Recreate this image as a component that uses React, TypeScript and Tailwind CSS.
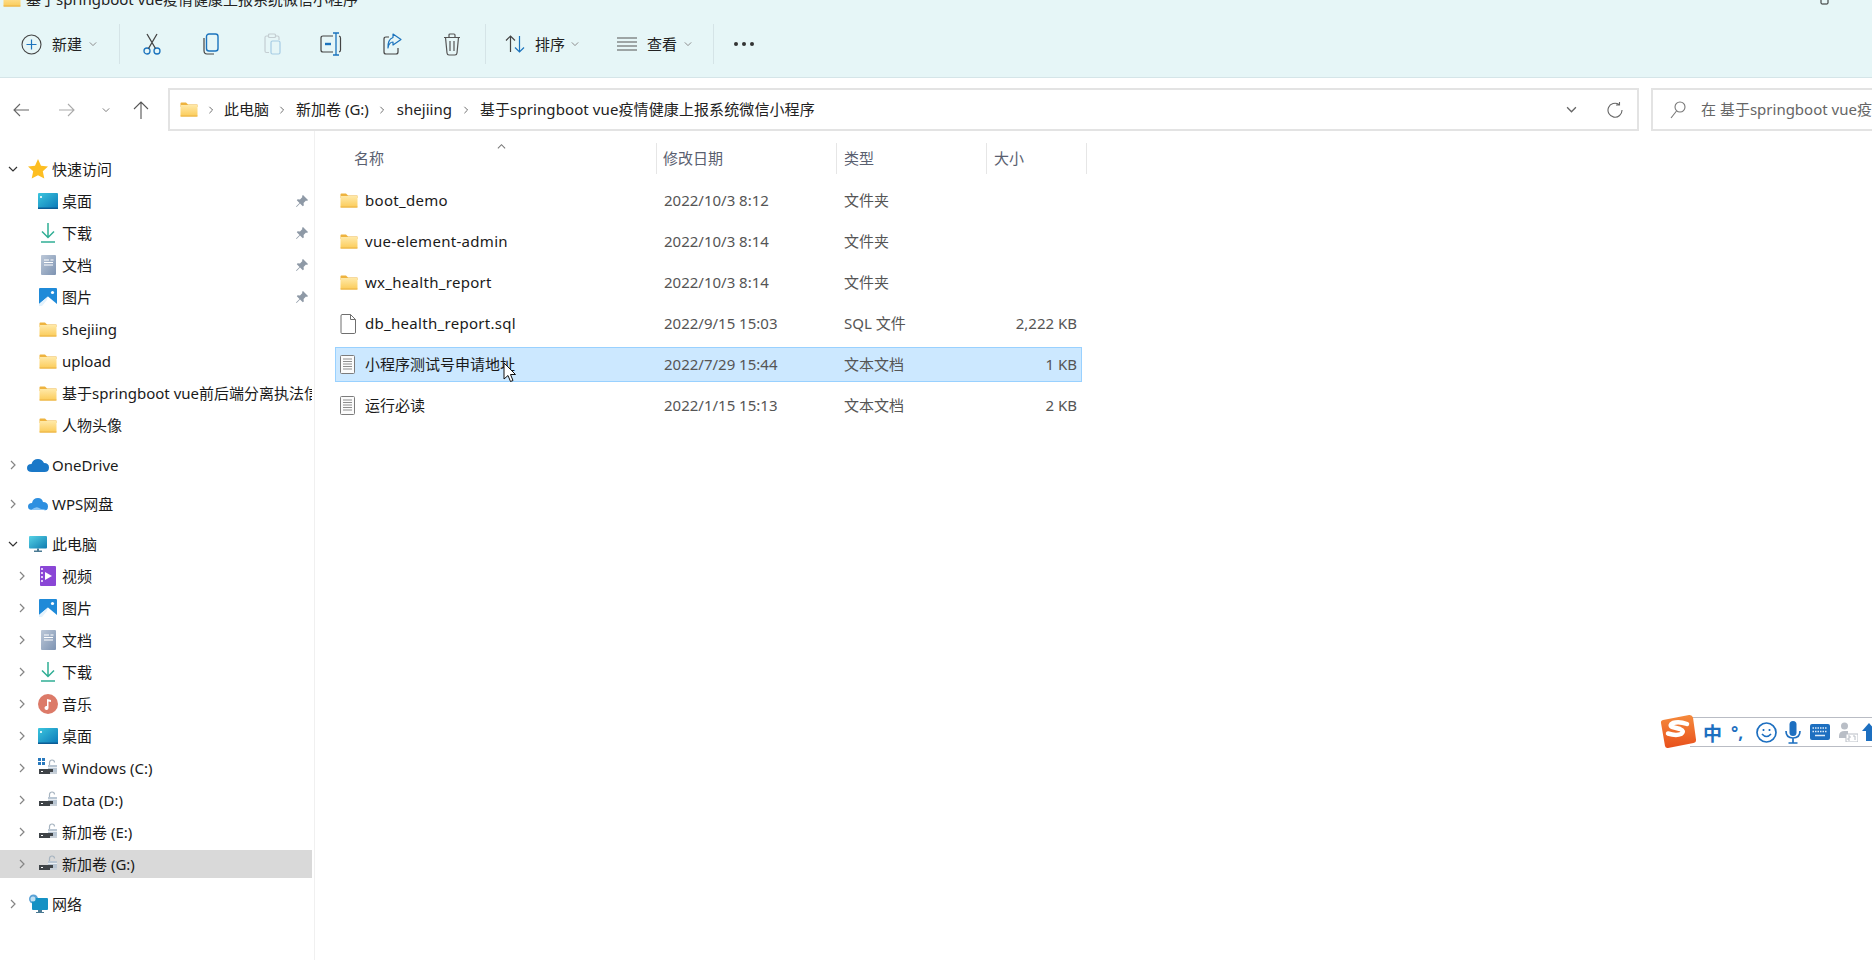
import React from "react";

const Folder = ({ id = "f" }: { id?: string }) => (
  <svg width="18" height="15" viewBox="0 0 18 15" className="shrink-0">
    <defs>
      <linearGradient id={id} x1="0" y1="0" x2="0" y2="1">
        <stop offset="0" stopColor="#ffe9a8" />
        <stop offset="1" stopColor="#fbcb58" />
      </linearGradient>
    </defs>
    <path d="M0.5 1.2C0.5 .7.9.5 1.3.5H6L8 2.5H17.5V5H.5Z" fill="#eeb33f" />
    <rect x="0.5" y="3" width="17" height="11.5" rx="0.8" fill={`url(#${id})`} />
    <rect x="0.5" y="13.6" width="17" height="0.9" fill="#e8ad3d" />
  </svg>
);

const Chev = ({ dir = "right", c = "#7b7b7b", s = 10 }: { dir?: "right" | "down" | "up"; c?: string; s?: number }) => (
  <svg width={s} height={s} viewBox="0 0 10 10" fill="none" stroke={c} strokeWidth="1.2" className="shrink-0">
    {dir === "right" && <path d="M3 1l4 4-4 4" />}
    {dir === "down" && <path d="M1 3l4 4 4-4" />}
    {dir === "up" && <path d="M1 7l4-4 4 4" />}
  </svg>
);

const Pin = () => (
  <svg width="14" height="14" viewBox="0 0 14 14" fill="#8e99a6">
    <path d="M8 1l5 5-1 1-1-.4L8.6 9l.2 2.4-1 .8L5 9.4 1.6 13 1 12.4 4.5 9 1.8 6.2l.8-1 2.4.2L7.4 3 7 2z" />
  </svg>
);

const Desktop = () => (
  <svg width="20" height="16" viewBox="0 0 20 16">
    <defs>
      <linearGradient id="dk" x1="0" y1="0" x2="1" y2="1">
        <stop offset="0" stopColor="#3cc6de" />
        <stop offset="1" stopColor="#0a78b8" />
      </linearGradient>
    </defs>
    <rect width="20" height="16" rx="1" fill="url(#dk)" />
    <rect x="2" y="3" width="2" height="2" fill="#d5f3f8" />
    <rect y="14.5" width="20" height="1.5" fill="#0c5c95" />
  </svg>
);

const Download = () => (
  <svg width="16" height="20" viewBox="0 0 16 20" fill="none" stroke="#2fae94" strokeWidth="1.5">
    <path d="M8 0v14M2 8.5l6 6 6-6" />
    <path d="M1 19h14" />
  </svg>
);

const Docs = () => (
  <svg width="15" height="20" viewBox="0 0 15 20">
    <defs>
      <linearGradient id="dc" x1="0" y1="0" x2="1" y2="1">
        <stop offset="0" stopColor="#bcc8d8" />
        <stop offset="1" stopColor="#7d93b2" />
      </linearGradient>
    </defs>
    <rect width="15" height="20" rx="1" fill="url(#dc)" />
    <path d="M3 5h5M3 7.5h9M3 10h9M9.5 5h3" stroke="#fff" strokeWidth="1" />
  </svg>
);

const Pics = () => (
  <svg width="18" height="18" viewBox="0 0 18 18">
    <rect width="18" height="18" rx="1" fill="#1f8ad8" />
    <circle cx="13.5" cy="4.5" r="1.6" fill="#fff" />
    <path d="M0 16L9 8.500l9 7.500v2H0z" fill="#fff" />
    <path d="M0 18v-2l9-7.500-1 3.500-5 6z" fill="#e4f2fc" />
  </svg>
);

const Drive = ({ win = false }: { win?: boolean }) => (
  <svg width="20" height="20" viewBox="0 0 20 20">
    {win && (
      <g fill="#2979bd">
        <rect x="0" y="0" width="3" height="3" />
        <rect x="4" y="0" width="3" height="3" />
        <rect x="0" y="4" width="3" height="3" />
        <rect x="4" y="4" width="3" height="3" />
      </g>
    )}
    <path d="M11.5 8V4.5a2.5 2.5 0 0 1 5 0" fill="none" stroke="#a7b4c0" strokeWidth="1.2" />
    <rect x="10" y="7" width="9" height="7" fill="#b9c6d3" />
    <rect x="10" y="9" width="9" height="1" fill="#e9eef3" />
    <rect x="1" y="11" width="14" height="5" fill="#3f4448" />
    <rect x="12" y="14" width="7" height="2" fill="#c8d0d8" />
    <rect x="3" y="13" width="2" height="1" fill="#fff" />
  </svg>
);

const Row = ({
  icon,
  label,
  level = 0,
  arrow,
  pin,
  selected,
}: {
  icon: React.ReactNode;
  label: string;
  level?: 0 | 1;
  arrow?: "right" | "down";
  pin?: boolean;
  selected?: boolean;
}) => (
  <div className="h-[32px] py-[2px] mr-[2px]">
    <div className={`h-[28px] flex items-center relative ${selected ? "bg-[#d9d9d9]" : ""}`}>
      <div className={`${level === 0 ? "w-[24px] pl-[8px]" : "w-[34px] pl-[17px]"} shrink-0 flex items-center`}>
        {arrow && <Chev dir={arrow} c={arrow === "down" ? "#333" : "#858585"} />}
      </div>
      <div className="w-[28px] shrink-0 flex justify-center">{icon}</div>
      <span className="text-[15px] text-[#1a1a1a] whitespace-nowrap overflow-hidden w-[250px]">{label}</span>
      {pin && (
        <span className="absolute right-[3px] top-[7px]">
          <Pin />
        </span>
      )}
    </div>
  </div>
);

const Sep = () => <div className="w-px h-[40px] bg-[#d5e4e7] shrink-0" />;

const FileTxt = () => (
  <svg width="15" height="19" viewBox="0 0 15 19" fill="#fbfbfb" stroke="#7c7c7c" strokeWidth="1">
    <rect x=".5" y=".5" width="14" height="18" rx="1" />
    <path d="M3 4h9M3 6.5h9M3 9h9M3 11.5h9M3 14h9" stroke="#8e8e8e" />
  </svg>
);

const FileBlank = () => (
  <svg width="16" height="20" viewBox="0 0 16 20" fill="#fff" stroke="#6f6f6f" strokeWidth="1">
    <path d="M1 2q0-1.500 1-1.500H10.500L15.500 5.500V18q0 1.500-1 1.500H2q-1 0-1-1z" />
    <path d="M10.500 .5V5.500H15.500" fill="none" />
  </svg>
);

const files = [
  { icon: <Folder id="r1" />, name: "boot_demo", date: "2022/10/3 8:12", type: "文件夹", size: "", latin: true },
  { icon: <Folder id="r2" />, name: "vue-element-admin", date: "2022/10/3 8:14", type: "文件夹", size: "", latin: true },
  { icon: <Folder id="r3" />, name: "wx_health_report", date: "2022/10/3 8:14", type: "文件夹", size: "", latin: true },
  { icon: <FileBlank />, name: "db_health_report.sql", date: "2022/9/15 15:03", type: "SQL 文件", size: "2,222 KB", latin: true },
  { icon: <FileTxt />, name: "小程序测试号申请地址", date: "2022/7/29 15:44", type: "文本文档", size: "1 KB", sel: true },
  { icon: <FileTxt />, name: "运行必读", date: "2022/1/15 15:13", type: "文本文档", size: "2 KB" },
];

export default function App() {
  return (
    <div
      className="relative w-[1872px] h-[960px] overflow-hidden bg-white text-[#1a1a1a]"
      style={{ fontFamily: '"Noto Sans", "Noto Sans CJK SC", sans-serif' }}
    >
      {/* ribbon */}
      <div className="h-[78px] bg-[#e6f6f7] border-b border-[#d5e5e8] relative">
        <div className="absolute left-[3px] -top-[12px] flex items-center gap-[5px] text-[15px] text-[#222] whitespace-nowrap">
          <Folder id="tt" />
          <span>基于springboot vue疫情健康上报系统微信小程序</span>
        </div>
        <svg className="absolute left-[1820px] -top-[3px]" width="12" height="9" viewBox="0 0 12 9" fill="none" stroke="#222" strokeWidth="1">
          <rect x="1" y="-3" width="7" height="10" rx="1" />
        </svg>
        <div className="flex items-center h-[40px] pt-0 translate-y-[24px] pl-[21px]">
          <svg width="21" height="21" viewBox="0 0 21 21" fill="none">
            <circle cx="10.500" cy="10.500" r="9.500" stroke="#444" strokeWidth="1.100" />
            <path d="M10.500 5.500v10M5.500 10.500h10" stroke="#1b73bd" strokeWidth="1.200" />
          </svg>
          <span className="ml-[10px] text-[15px] text-[#222]">新建</span>
          <span className="ml-[7px]"><Chev dir="down" s={8} c="#888" /></span>
          <span className="ml-[22px]"><Sep /></span>
          <svg className="ml-[23px]" width="18" height="22" viewBox="0 0 18 22" fill="none" stroke="#1b73bd" strokeWidth="1.300">
            <circle cx="4" cy="18" r="3" />
            <circle cx="14" cy="18" r="3" />
            <path d="M5.500 15.500L14 1M12.500 15.500L4 1" stroke="#444" />
          </svg>
          <svg className="ml-[42px]" width="16" height="22" viewBox="0 0 16 22" fill="none">
            <rect x="3.500" y="1" width="11.500" height="17" rx="2.500" stroke="#1b73bd" strokeWidth="1.400" />
            <path d="M1 5v12.500Q1 21 4 21h7" stroke="#444" strokeWidth="1.200" />
          </svg>
          <svg className="ml-[45px]" width="17" height="22" viewBox="0 0 17 22" fill="none">
            <path d="M4 3H2.500Q1 3 1 4.500V18q0 1.500 1.500 1.500H5" stroke="#c4ced2" strokeWidth="1.200" />
            <path d="M12 3h1.500Q15 3 15 4.500V7" stroke="#c4ced2" strokeWidth="1.200" />
            <rect x="4.500" y="1" width="7" height="3.500" rx="1" stroke="#c4ced2" strokeWidth="1.200" />
            <rect x="7" y="8" width="9" height="13" rx="1.500" stroke="#a6cce4" strokeWidth="1.200" />
          </svg>
          <svg className="ml-[39px]" width="22" height="24" viewBox="0 0 22 24" fill="none">
            <path d="M13 4H3Q1 4 1 6v12q0 2 2 2h10M19 4q1.500.3 1.500 2v12q0 1.700-1.500 2" stroke="#444" strokeWidth="1.200" />
            <path d="M16 1v22M13 1h6M13 23h6" stroke="#1b73bd" strokeWidth="1.300" />
            <path d="M5 12h6" stroke="#1b73bd" strokeWidth="2.400" />
          </svg>
          <svg className="ml-[41px]" width="19" height="22" viewBox="0 0 19 22" fill="none">
            <path d="M6 4H3Q1 4 1 6v13q0 2 2 2h10q2 0 2-2v-4" stroke="#444" strokeWidth="1.200" />
            <path d="M10 1l8 5.500-8 5.500V9Q6 9 5 15 4.500 6.500 10 4.500z" stroke="#1b73bd" strokeWidth="1.200" strokeLinejoin="round" />
          </svg>
          <svg className="ml-[41px]" width="18" height="23" viewBox="0 0 18 23" fill="none" stroke="#555" strokeWidth="1.200">
            <path d="M1 4.500h16M6 4.500V2q0-1 1-1h4q1 0 1 1v2.500" />
            <path d="M2.500 4.500L4 20q.2 2 2 2h6q1.800 0 2-2l1.500-15.500" />
            <path d="M7 8v10M11 8v10" />
          </svg>
          <span className="ml-[24px]"><Sep /></span>
          <svg className="ml-[19px]" width="20" height="18" viewBox="0 0 20 18" fill="none" strokeWidth="1.200">
            <path d="M5.500 17V1M1 5.500l4.500-4.500L10 5.500" stroke="#444" />
            <path d="M14.500 1v16M10 12.500l4.500 4.500 4.500-4.500" stroke="#1b73bd" />
          </svg>
          <span className="ml-[10px] text-[15px] text-[#222]">排序</span>
          <span className="ml-[6px]"><Chev dir="down" s={8} c="#888" /></span>
          <svg className="ml-[38px]" width="20" height="14" viewBox="0 0 20 14" fill="none" stroke="#555" strokeWidth="1.100">
            <path d="M0 1h20M0 5h20M0 9h20M0 13h20" />
          </svg>
          <span className="ml-[10px] text-[15px] text-[#222]">查看</span>
          <span className="ml-[7px]"><Chev dir="down" s={8} c="#888" /></span>
          <span className="ml-[21px]"><Sep /></span>
          <span className="ml-[20px] flex gap-[4px]">
            <i className="block w-[4px] h-[4px] rounded-full bg-[#333]" />
            <i className="block w-[4px] h-[4px] rounded-full bg-[#333]" />
            <i className="block w-[4px] h-[4px] rounded-full bg-[#333]" />
          </span>
        </div>
      </div>

      {/* address row */}
      <div className="h-[53px] pt-[10px] flex">
        <div className="w-[168px] h-[43px] flex items-center shrink-0 pl-[13px]">
          <svg width="16" height="14" viewBox="0 0 16 14" fill="none" stroke="#666" strokeWidth="1.100"><path d="M16 7H1M7 1L1 7l6 6" /></svg>
          <svg className="ml-[30px]" width="16" height="14" viewBox="0 0 16 14" fill="none" stroke="#aaa" strokeWidth="1.100"><path d="M0 7h15M9 1l6 6-6 6" /></svg>
          <span className="ml-[27px]"><Chev dir="down" s={8} c="#777" /></span>
          <svg className="ml-[23px]" width="16" height="18" viewBox="0 0 16 18" fill="none" stroke="#555" strokeWidth="1.100"><path d="M8 18V1M1 8l7-7 7 7" /></svg>
        </div>
        <div className="w-[1471px] h-[43px] border-2 border-[#e3e3e3] flex items-center pl-[10px] shrink-0 text-[15px] text-[#222] box-border">
          <Folder id="ad" />
          <span className="ml-[9px]"><Chev s={8} c="#666" /></span>
          <span className="ml-[9px]">此电脑</span>
          <span className="ml-[9px]"><Chev s={8} c="#666" /></span>
          <span className="ml-[10px]">新加卷 (G:)</span>
          <span className="ml-[9px]"><Chev s={8} c="#666" /></span>
          <span className="ml-[11px]">shejiing</span>
          <span className="ml-[10px]"><Chev s={8} c="#666" /></span>
          <span className="ml-[10px] tracking-[0.1px]">基于springboot vue疫情健康上报系统微信小程序</span>
          <span className="ml-auto"><Chev dir="down" s={11} c="#666" /></span>
          <svg className="ml-[30px] mr-[14px]" width="16" height="18" viewBox="0 0 16 18" fill="none" stroke="#666" strokeWidth="1.100">
            <path d="M12 3.500A7 7 0 1 0 15 9M12.500 1v3H9" />
          </svg>
        </div>
        <div className="ml-[12px] flex-1 h-[43px] border-2 border-r-0 border-[#e3e3e3] flex items-center pl-[17px] overflow-hidden text-[15px] text-[#666] whitespace-nowrap box-border">
          <svg width="16" height="18" viewBox="0 0 16 18" fill="none" stroke="#777" strokeWidth="1.100" className="shrink-0">
            <circle cx="10" cy="6" r="5" />
            <path d="M6.500 10L1 17" />
          </svg>
          <span className="ml-[15px]">在 基于springboot vue疫情健康上报系统微信小程序</span>
        </div>
      </div>

      {/* main */}
      <div className="flex h-[829px]">
        <aside className="w-[314px] border-r border-[#f0f0f0] pt-[22px] shrink-0 box-content">
          <Row arrow="down" icon={<svg width="22" height="22" viewBox="0 0 22 22"><path d="M11 1l3 6.700 7 .8-5.200 4.800 1.500 7.200L11 17.200 4.700 20.500l1.500-7.200L1 8.500l7-.8z" fill="#fdbe21" /></svg>} label="快速访问" />
          <Row level={1} icon={<Desktop />} label="桌面" pin />
          <Row level={1} icon={<Download />} label="下载" pin />
          <Row level={1} icon={<Docs />} label="文档" pin />
          <Row level={1} icon={<Pics />} label="图片" pin />
          <Row level={1} icon={<Folder id="s1" />} label="shejiing" />
          <Row level={1} icon={<Folder id="s2" />} label="upload" />
          <Row level={1} icon={<Folder id="s3" />} label="基于springboot vue前后端分离执法信息管理系统" />
          <Row level={1} icon={<Folder id="s4" />} label="人物头像" />
          <div className="mt-[8px]">
            <Row arrow="right" icon={<svg width="22" height="14" viewBox="0 0 22 14"><path d="M5 14Q0 14 0 10t4.500-4Q6 1 11 1q4 0 6 4 5 0 5 4.500T17.500 14z" fill="#1a78c8" /></svg>} label="OneDrive" />
          </div>
          <div className="mt-[7px]">
            <Row arrow="right" icon={<svg width="20" height="14" viewBox="0 0 20 14"><path d="M4 13Q0 13 0 9.500 0 6 4 6q1-5 6-5 4 0 5 4 5 0 5 4.500T16 13z" fill="#2d8fe0" /><path d="M3 13q5-4 8-2t7 1l-2 1z" fill="#8cc6f5" /></svg>} label="WPS网盘" />
          </div>
          <div className="mt-[8px]">
            <Row arrow="down" icon={<svg width="18" height="16" viewBox="0 0 18 16"><defs><linearGradient id="pc" x1="0" y1="0" x2="1" y2="1"><stop offset="0" stopColor="#56d3e6" /><stop offset="1" stopColor="#0f7bb0" /></linearGradient></defs><rect width="18" height="12.500" rx="1" fill="url(#pc)" /><path d="M8 12.500h2v2h3V16H5v-1.500h3z" fill="#4b7a93" /></svg>} label="此电脑" />
            <Row level={1} arrow="right" icon={<svg width="16" height="20" viewBox="0 0 16 20"><rect width="16" height="20" rx="1" fill="#8a46d6" /><path d="M5 6l7 4-7 4z" fill="#fff" /><g fill="#e2ccf7"><rect x="1" y="2" width="2" height="2" /><rect x="1" y="6" width="2" height="2" /><rect x="1" y="10" width="2" height="2" /><rect x="1" y="14" width="2" height="2" /></g></svg>} label="视频" />
            <Row level={1} arrow="right" icon={<Pics />} label="图片" />
            <Row level={1} arrow="right" icon={<Docs />} label="文档" />
            <Row level={1} arrow="right" icon={<Download />} label="下载" />
            <Row level={1} arrow="right" icon={<svg width="20" height="20" viewBox="0 0 20 20"><circle cx="10" cy="10" r="10" fill="#dc7a68" /><path d="M9 14V5l4 1v2l-2.500-.6V14a2 2 0 1 1-1.500-2z" fill="#fff" /></svg>} label="音乐" />
            <Row level={1} arrow="right" icon={<Desktop />} label="桌面" />
            <Row level={1} arrow="right" icon={<Drive win />} label="Windows (C:)" />
            <Row level={1} arrow="right" icon={<Drive />} label="Data (D:)" />
            <Row level={1} arrow="right" icon={<Drive />} label="新加卷 (E:)" />
            <Row level={1} arrow="right" icon={<Drive />} label="新加卷 (G:)" selected />
          </div>
          <div className="mt-[8px]">
            <Row arrow="right" icon={<svg width="20" height="20" viewBox="0 0 20 20"><circle cx="5.500" cy="5" r="4.500" fill="#5ba2d6" /><rect x="4" y="4" width="16" height="12" rx="1" fill="#1591c4" /><path d="M10 16h4v2h2v1H8v-1h2z" fill="#4b7a93" /><circle cx="5" cy="5" r="2.500" fill="#bfe0f2" /></svg>} label="网络" />
          </div>
        </aside>

        {/* files */}
        <main className="flex-1 pt-[12px] pl-[20px]">
          <div className="flex h-[31px] w-[752px] text-[15px] text-[#5a6070]">
            <div className="w-[321px] pl-[19px] flex items-center relative">
              名称
              <span className="absolute left-[162px] -top-[1px]"><Chev dir="up" s={9} c="#777" /></span>
            </div>
            <div className="w-[180px] pl-[6px] flex items-center border-l border-[#e6e6e6]">修改日期</div>
            <div className="w-[150px] pl-[7px] flex items-center border-l border-[#e6e6e6]">类型</div>
            <div className="w-[101px] pl-[7px] flex items-center border-x border-[#e6e6e6]">大小</div>
          </div>
          <div className="mt-[9px] flex flex-col gap-[6px] w-[747px]">
            {files.map((f) => (
              <div
                key={f.name}
                className={`h-[35px] flex items-center text-[15px] border box-border ${f.sel ? "bg-[#cce8ff] border-[#99d1ff]" : "border-transparent"}`}
              >
                <div className="w-[321px] flex items-center">
                  <div className="w-[29px] pl-[4px] flex justify-start shrink-0">{f.icon}</div>
                  <span className={`text-[#1a1a1a] whitespace-nowrap ${f.latin ? "tracking-[0.3px]" : ""}`}>{f.name}</span>
                </div>
                <div className="w-[179px] pl-[7px] text-[#555]">{f.date}</div>
                <div className="w-[150px] pl-[8px] text-[#555]">{f.type}</div>
                <div className="flex-1 text-right pr-[4px] text-[#555]">{f.size}</div>
              </div>
            ))}
          </div>
        </main>
      </div>

      {/* mouse cursor */}
      <svg className="absolute left-[503px] top-[362px]" width="13" height="21" viewBox="0 0 13 21">
        <path d="M1 1v16l4-3.500 2.500 6 2.500-1-2.500-6H12.500z" fill="#fff" stroke="#111" strokeWidth="1" />
      </svg>

      {/* IME bar */}
      <div className="absolute left-[1690px] top-[717px] w-[182px] h-[30px] bg-white border-y border-[#b9bcc4] flex items-center text-[#1d6fc0] overflow-hidden">
        <span className="ml-[13px] text-[19px] font-bold leading-none" style={{ fontFamily: '"Noto Sans CJK SC", sans-serif' }}>中</span>
        <span className="ml-[9px] text-[17px] font-bold leading-none whitespace-nowrap">°,</span>
        <svg className="ml-[13px] shrink-0" width="21" height="21" viewBox="0 0 21 21" fill="none" stroke="#1d6fc0" strokeWidth="1.700">
          <circle cx="10.500" cy="10.500" r="9.500" />
          <path d="M6 12q4.500 5 9 0" />
          <path d="M7.500 7v2M13.500 7v2" />
        </svg>
        <svg className="ml-[8px] shrink-0" width="16" height="23" viewBox="0 0 16 23" fill="none">
          <rect x="4.500" y="0" width="7" height="15" rx="3.500" fill="#1d6fc0" />
          <path d="M1 10q0 7 7 7t7-7M8 17v5M3.500 22h9" stroke="#1d6fc0" strokeWidth="1.700" />
        </svg>
        <svg className="ml-[9px] shrink-0" width="20" height="16" viewBox="0 0 20 16">
          <rect width="20" height="16" rx="2" fill="#1d6fc0" />
          <g fill="none" stroke="#dcebf8" strokeWidth="1.500" strokeDasharray="1.500 1">
            <path d="M2.500 4h15M2.500 7.500h15" />
          </g>
          <path d="M5 11.500h10" stroke="#dcebf8" strokeWidth="1.500" />
        </svg>
        <svg className="ml-[8px] shrink-0" width="20" height="20" viewBox="0 0 20 20">
          <circle cx="6.500" cy="4" r="3.500" fill="#b9bec6" />
          <path d="M1 14q0-5 5.500-5H10v7H1z" fill="#b9bec6" />
          <rect x="8" y="12" width="12" height="8" fill="#fff" stroke="#b9bec6" />
          <path d="M10 14h2v2h-2v2h2M15 14h2v4" fill="none" stroke="#b9bec6" />
        </svg>
        <svg className="ml-[3px] shrink-0" width="16" height="20" viewBox="0 0 16 20">
          <path d="M8 1l7 8h-4v10H5V9H1z" fill="#1d6fc0" />
        </svg>
      </div>
      <svg className="absolute left-[1660px] top-[713px]" width="37" height="37" viewBox="0 0 37 37">
        <defs>
          <linearGradient id="sg" x1="0" y1="0" x2="0" y2="1">
            <stop offset="0" stopColor="#f58a3c" />
            <stop offset="1" stopColor="#e8501c" />
          </linearGradient>
        </defs>
        <path d="M3 7l26-5q3-.5 4 2.500l3 22q.3 3-2.500 3.500L8 35q-2.500.3-3-2L1 10q-.4-2.500 2-3z" fill="url(#sg)" />
        <path d="M27 11q-8-3-14-1-4 2-1 4l8 2q5 2 1 5-5 2-13-.5" fill="none" stroke="#fff" strokeWidth="4.500" strokeLinecap="round" />
      </svg>
    </div>
  );
}
